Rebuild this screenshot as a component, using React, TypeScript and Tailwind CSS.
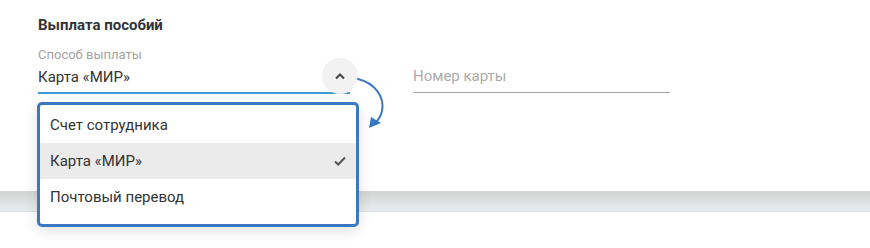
import { useState } from "react";

const Options = ["Счет сотрудника", "Карта «МИР»", "Почтовый перевод"];

const ChevronUp = () => (
  <svg width="12" height="8" viewBox="0 0 12 8" fill="none">
    <path d="M2 6.5 L6 2.5 L10 6.5" stroke="#4a4a4a" strokeWidth="2.2" />
  </svg>
);

const Check = () => (
  <svg width="12" height="10" viewBox="0 0 12 10" fill="none">
    <path d="M1 5.5 L4.2 8.5 L11 1.5" stroke="#555" strokeWidth="2" />
  </svg>
);

const Arrow = () => (
  <svg
    className="absolute left-[312px] top-[23px] z-20"
    width="40"
    height="65"
    viewBox="0 0 40 65"
    fill="none"
  >
    <path
      d="M8 9 C 24 13, 35 26, 32 41 C 31 46, 29 49, 26 52"
      stroke="#3a78c2"
      strokeWidth="2"
      strokeLinecap="round"
    />
    <polygon points="19,58 21,47 31,53" fill="#3a78c2" />
  </svg>
);

export default function App() {
  const [selected] = useState(1);
  return (
    <div className="w-[870px] h-[248px] bg-white overflow-hidden font-['Roboto',sans-serif]">
      <section className="h-[191px] bg-white px-[38px] pt-[15px]">
        <h3 className="text-[15px] leading-[20px] font-bold text-[#333]">
          Выплата пособий
        </h3>
        <div className="flex items-end gap-[63px] mt-[12px]">
          <div className="relative w-[312px]">
            <p className="text-[13px] leading-[16px] text-[#a3a3a3]">
              Способ выплаты
            </p>
            <div className="mt-[3px] pb-[4px] border-b-2 border-[#3d9bdb] text-[15px] leading-[22px] text-[#333]">
              {Options[selected]}
            </div>
            <button className="absolute right-[-8px] top-[11px] w-9 h-9 rounded-full bg-[#f2f2f2] flex items-center justify-center">
              <ChevronUp />
            </button>
            <Arrow />
            <ul className="absolute left-[-1px] top-[calc(100%+8px)] w-[322px] h-[125px] bg-white border-[3px] border-[#3a78c2] rounded-[5px] shadow-[0_4px_14px_rgba(0,0,0,0.12)] pt-[2px] z-10">
              {Options.map((o, i) => (
                <li
                  key={o}
                  className={`h-[36px] flex items-center justify-between pl-[10px] pr-[10px] text-[15px] text-[#333] ${
                    i === selected ? "bg-[#ebebeb]" : ""
                  }`}
                >
                  <span>{o}</span>
                  {i === selected && <Check />}
                </li>
              ))}
            </ul>
          </div>
          <div className="w-[257px] border-b border-[#a8a8a8] pb-[5px] mb-[1px] text-[15px] leading-[22px] text-[#ababab]">
            Номер карты
          </div>
        </div>
      </section>
      <div className="h-[21px] bg-gradient-to-b from-[#d3d3d3] to-[#e9ecef] border-b border-[#dde1e5]" />
      <div className="h-[36px] bg-white" />
    </div>
  );
}
